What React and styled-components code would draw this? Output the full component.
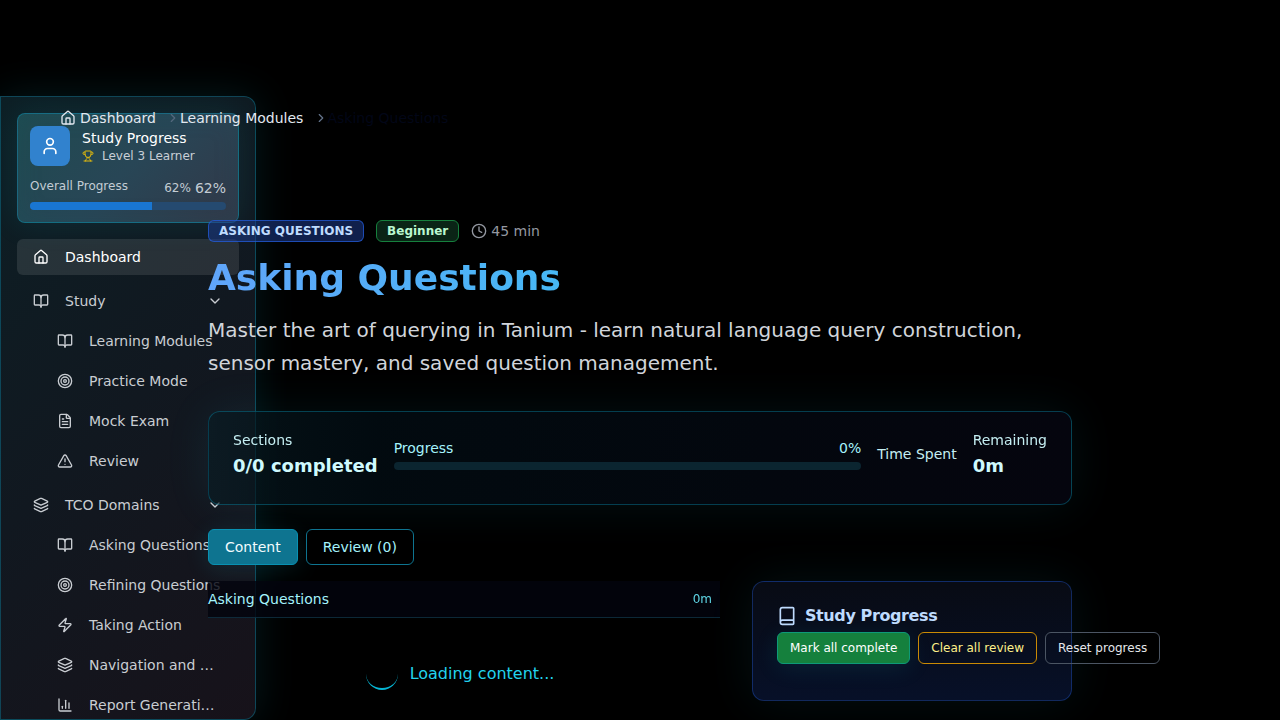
import React from 'react';
import styled, { createGlobalStyle, css } from 'styled-components';
import {
  House, BookOpen, Target, FileText, TriangleAlert, Layers, Zap, ChartColumn,
  ChevronDown, ChevronRight, User, Trophy, Clock, Book,
} from 'lucide-react';

const GlobalStyle = createGlobalStyle`
  *, *::before, *::after { box-sizing: border-box; }
  html, body { margin: 0; background: #000; }
  body {
    font-family: "DejaVu Sans", sans-serif;
    font-size: 14px;
    line-height: 20px;
    color: #e5e7eb;
    overflow: hidden;
  }
  h1, h2, p { margin: 0; }
  button { font: inherit; margin: 0; }
  svg { display: block; flex: none; }
`;

const Page = styled.div`
  position: relative;
  height: 720px;
  overflow: hidden;
  background: #000;
`;

/* Sidebar */

const Sidebar = styled.aside`
  position: absolute;
  top: 96px;
  left: 0;
  width: 256px;
  height: 624px;
  padding: 16px;
  overflow: hidden;
  border: 1px solid rgba(8, 145, 178, 0.4);
  border-radius: 0 12px 12px 0;
  background: linear-gradient(135deg, #0d1f25 0%, #111820 50%, #17121a 100%);
  box-shadow: 0 0 40px rgba(34, 211, 238, 0.12);
`;

const ProfileCard = styled.section`
  height: 110px;
  padding: 12px;
  border: 1px solid rgba(8, 145, 178, 0.5);
  border-radius: 8px;
  background: linear-gradient(135deg, #1f4a50 0%, #284656 50%, #323848 100%);
  box-shadow: 0 0 32px rgba(34, 211, 238, 0.1), inset 0 0 24px rgba(20, 90, 100, 0.2);
`;

const ProfileTop = styled.div`
  display: flex;
  gap: 12px;
`;

const Avatar = styled.div`
  display: grid;
  place-items: center;
  width: 40px;
  height: 40px;
  border-radius: 8px;
  background: #3182ce;
  color: #fff;
`;

const ProfileName = styled.div`
  margin-top: 2px;
  color: #fff;
`;

const ProfileLevel = styled.div`
  display: flex;
  align-items: center;
  gap: 8px;
  height: 16px;
  font-size: 12px;
  color: #c9cfd6;
  svg { color: #e0b90f; }
`;

const ProfileProgress = styled.div`
  display: flex;
  justify-content: space-between;
  height: 20px;
  margin-top: 12px;
  font-size: 12px;
  line-height: 16px;
  color: #c3ccd4;
`;

const Percents = styled.span`
  display: flex;
  align-items: flex-start;
  gap: 4px;
  line-height: 20px;
  b { font-size: 14px; font-weight: 400; }
`;

const Track = styled.div`
  height: 8px;
  margin-top: 4px;
  border-radius: 4px;
  overflow: hidden;
  background: ${(p) => p.$color};
`;

const Fill = styled.div`
  height: 100%;
  width: ${(p) => p.$value}%;
  background: #1976d2;
`;

const Menu = styled.nav`
  display: flex;
  flex-direction: column;
  gap: 8px;
  margin-top: 16px;
`;

const Group = styled.div`
  display: flex;
  flex-direction: column;
  gap: 4px;
`;

const MenuRow = styled.a`
  display: flex;
  align-items: center;
  gap: 16px;
  height: 36px;
  padding: 0 16px;
  margin-left: ${(p) => (p.$nested ? 24 : 0)}px;
  border-radius: 6px;
  white-space: nowrap;
  color: #c9cdd2;
  ${(p) => p.$active && css`
    color: #fff;
    background: rgba(255, 255, 255, 0.1);
  `}
  span { flex: 1; }
`;

/* Content */

const Shell = styled.div`
  position: relative;
  padding-top: 108px;
`;

const Breadcrumbs = styled.nav`
  display: flex;
  align-items: center;
  height: 20px;
  padding-left: 60px;
  color: #e5e7eb;
`;

const Crumb = styled.span`
  display: flex;
  align-items: center;
  gap: 4px;
  color: ${(p) => (p.$current ? '#020617' : '#e2e8f0')};
`;

const Separator = styled(ChevronRight)`
  margin-left: ${(p) => p.$gap}px;
  margin-right: ${(p) => 10 - p.$gap}px;
  color: #64748b;
  opacity: ${(p) => p.$opacity};
`;

const Main = styled.main`
  width: 864px;
  margin: 92px auto 0;
`;

const Meta = styled.div`
  display: flex;
  align-items: center;
  gap: 12px;
  height: 22px;
`;

const Badge = styled.span`
  height: 22px;
  padding: 2px 10px;
  border: 1px solid ${(p) => p.$border};
  border-radius: 6px;
  background: ${(p) => p.$bg};
  color: ${(p) => p.$fg};
  font-size: 12px;
  font-weight: 700;
  line-height: 16px;
`;

const Duration = styled.span`
  display: flex;
  align-items: center;
  gap: 4px;
  color: #9498a1;
`;

const Title = styled.h1`
  margin-top: 16px;
  font-size: 36px;
  font-weight: 700;
  line-height: 40px;
  color: transparent;
  background: linear-gradient(90deg, #60a5fa, #22d3ee);
  background-clip: text;
  -webkit-background-clip: text;
`;

const Lead = styled.p`
  margin-top: 16px;
  font-size: 20px;
  line-height: 32.5px;
  color: #d1d5db;
`;

const Stats = styled.section`
  display: flex;
  gap: 16px;
  height: 94px;
  margin-top: 32px;
  padding: 18px 24px 24px;
  border: 1px solid rgba(8, 145, 178, 0.4);
  border-radius: 12px;
  background: linear-gradient(90deg, rgba(8, 30, 38, 0.6), rgba(2, 11, 17, 0.9) 20%, #03070e 65%, #05050e);
  box-shadow: 0 0 48px rgba(34, 211, 238, 0.08);
  color: #cffafe;
`;

const Stat = styled.div`
  white-space: nowrap;
`;

const StatLabel = styled.div`
  opacity: 0.95;
`;

const StatValue = styled.div`
  margin-top: 2px;
  font-size: 18px;
  font-weight: 700;
  line-height: 28px;
`;

const TimeSpent = styled(Stat)`
  padding-top: 14px;
  color: #c5eef2;
`;

const ProgressStat = styled(Stat)`
  flex: 1;
  padding-top: 8px;
  color: #a5f3fc;
`;

const ProgressHead = styled.div`
  display: flex;
  justify-content: space-between;
`;

const Tabs = styled.div`
  display: flex;
  gap: 8px;
  margin-top: 24px;
`;

const Tab = styled.button`
  height: 36px;
  padding: 0 16px;
  border: 1px solid ${(p) => (p.$active ? '#0891b2' : '#0e7490')};
  border-radius: 6px;
  background: ${(p) => (p.$active ? '#0e7490' : '#000')};
  color: ${(p) => (p.$active ? '#f3fbfd' : '#a5f3fc')};
  box-shadow: ${(p) => (p.$active ? '0 4px 24px rgba(34, 211, 238, 0.12)' : 'none')};
`;

const Columns = styled.div`
  display: grid;
  grid-template-columns: 512px 320px;
  gap: 32px;
  align-items: start;
  margin-top: 16px;
`;

const LessonHeader = styled.header`
  display: flex;
  align-items: center;
  justify-content: space-between;
  height: 37px;
  padding-right: 8px;
  border-bottom: 1px solid rgba(22, 78, 99, 0.5);
  background: rgba(2, 4, 14, 0.8);
  color: #a5f3fc;
  small { font-size: 12px; color: #67e8f9; opacity: 0.9; }
`;

const Loading = styled.div`
  display: flex;
  align-items: center;
  justify-content: center;
  gap: 12px;
  height: 32px;
  margin-top: 40px;
  padding-right: 8px;
  font-size: 16px;
  color: #22d3ee;
`;

const Spinner = styled.i`
  width: 32px;
  height: 32px;
  border-radius: 50%;
  border-bottom: 2px solid #06b6d4;
`;

const ProgressCard = styled.aside`
  height: 120px;
  padding: 24px;
  border: 1px solid rgba(37, 99, 235, 0.34);
  border-radius: 12px;
  background: linear-gradient(180deg, #080b14, #071028);
  box-shadow: 0 0 48px rgba(34, 211, 238, 0.08);
`;

const CardTitle = styled.h2`
  display: flex;
  align-items: center;
  gap: 8px;
  height: 20px;
  font-size: 16px;
  font-weight: 700;
  letter-spacing: -0.4px;
  color: #bfdbfe;
`;

const Actions = styled.div`
  display: flex;
  gap: 8px;
  margin-top: 6px;
`;

const Action = styled.button`
  flex: none;
  height: 32px;
  padding: 0 12px;
  border: 1px solid ${(p) => p.$border};
  border-radius: 6px;
  background: ${(p) => p.$bg || 'transparent'};
  color: ${(p) => p.$fg};
  font-size: 12px;
  box-shadow: ${(p) => (p.$bg ? '0 4px 24px rgba(34, 211, 238, 0.1)' : 'none')};
`;

const groups = [
  {
    label: 'Study', icon: BookOpen,
    items: [
      ['Learning Modules', BookOpen], ['Practice Mode', Target],
      ['Mock Exam', FileText], ['Review', TriangleAlert],
    ],
  },
  {
    label: 'TCO Domains', icon: Layers,
    items: [
      ['Asking Questions', BookOpen], ['Refining Questions', Target], ['Taking Action', Zap],
      ['Navigation and …', Layers], ['Report Generati…', ChartColumn],
    ],
  },
];

export default function App() {
  return (
    <Page>
      <GlobalStyle />
      <Sidebar>
        <ProfileCard>
          <ProfileTop>
            <Avatar><User size={20} /></Avatar>
            <div>
              <ProfileName>Study Progress</ProfileName>
              <ProfileLevel><Trophy size={12} />Level 3 Learner</ProfileLevel>
            </div>
          </ProfileTop>
          <ProfileProgress>
            <span>Overall Progress</span>
            <Percents><span>62%</span><b>62%</b></Percents>
          </ProfileProgress>
          <Track $color="#254a70"><Fill $value={62} /></Track>
        </ProfileCard>
        <Menu>
          <MenuRow $active><House size={16} /><span>Dashboard</span></MenuRow>
          {groups.map(({ label, icon: Icon, items }) => (
            <Group key={label}>
              <MenuRow><Icon size={16} /><span>{label}</span><ChevronDown size={16} /></MenuRow>
              {items.map(([text, ItemIcon]) => (
                <MenuRow key={text} $nested><ItemIcon size={16} /><span>{text}</span></MenuRow>
              ))}
            </Group>
          ))}
        </Menu>
      </Sidebar>

      <Shell>
        <Breadcrumbs>
          <Crumb><House size={16} />Dashboard</Crumb>
          <Separator size={14} $gap={10.5} $opacity={0.75} />
          <Crumb>Learning Modules</Crumb>
          <Separator size={14} $gap={11} $opacity={1} />
          <Crumb $current>Asking Questions</Crumb>
        </Breadcrumbs>

        <Main>
          <Meta>
            <Badge $bg="rgba(30, 58, 138, 0.55)" $border="rgba(37, 99, 235, 0.65)" $fg="#bfdbfe">ASKING QUESTIONS</Badge>
            <Badge $bg="#0a2416" $border="#16803d" $fg="#bbf7d0">Beginner</Badge>
            <Duration><Clock size={16} />45 min</Duration>
          </Meta>
          <Title>Asking Questions</Title>
          <Lead>
            Master the art of querying in Tanium - learn natural language query construction,
            sensor mastery, and saved question management.
          </Lead>

          <Stats>
            <Stat><StatLabel>Sections</StatLabel><StatValue>0/0 completed</StatValue></Stat>
            <ProgressStat>
              <ProgressHead><span>Progress</span><span>0%</span></ProgressHead>
              <Track $color="#0b2530" />
            </ProgressStat>
            <TimeSpent>Time Spent</TimeSpent>
            <Stat><StatLabel>Remaining</StatLabel><StatValue>0m</StatValue></Stat>
          </Stats>

          <Tabs>
            <Tab $active>Content</Tab>
            <Tab>Review (0)</Tab>
          </Tabs>

          <Columns>
            <section>
              <LessonHeader>Asking Questions<small>0m</small></LessonHeader>
              <Loading><Spinner />Loading content...</Loading>
            </section>
            <ProgressCard>
              <CardTitle><Book size={20} />Study Progress</CardTitle>
              <Actions>
                <Action $bg="#15803d" $border="#0e9a78" $fg="#fff">Mark all complete</Action>
                <Action $border="#ca8a04" $fg="#fef08a">Clear all review</Action>
                <Action $border="#4b5563" $fg="#e5e7eb">Reset progress</Action>
              </Actions>
            </ProgressCard>
          </Columns>
        </Main>
      </Shell>
    </Page>
  );
}
